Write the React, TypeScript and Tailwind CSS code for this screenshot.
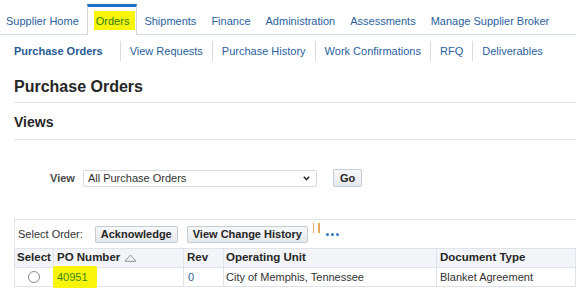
import React from "react";

const Sep = () => <div className="w-px h-[20px] bg-[#d6dce2]" />;

export default function App() {
  const blue = "text-[#2a5f9e]";
  return (
    <div className="w-[576px] h-[299px] overflow-hidden bg-white font-['Liberation_Sans',Arial,sans-serif] text-[11px] text-[#333]">
      {/* Top tabs */}
      <div className="flex items-end h-[35px] border-b border-[#d3d9df]">
        <div className={`pl-[6px] pr-[8px] pt-[8px] pb-[3px] leading-[19px] ${blue}`}>Supplier Home</div>
        <div className="-mb-px bg-white border-l border-r border-t-[3px] border-l-[#d3d9df] border-r-[#d3d9df] border-t-[#1f6fc5] pl-[6px] pr-[1px] pt-[4px] pb-[5px] leading-[19px]">
          <span className="block bg-[#f8f40a] pl-[2px] pr-[6px] pt-[1px] leading-[18px] text-[#2f7d14]">Orders</span>
        </div>
        {["Shipments", "Finance", "Administration", "Assessments", "Manage Supplier Broker"].map((t) => (
          <div key={t} className={`pl-[7px] pr-[8px] pt-[8px] pb-[3px] leading-[19px] whitespace-nowrap ${blue}`}>
            {t}
          </div>
        ))}
      </div>

      {/* Sub navigation */}
      <div className={`flex items-center h-[32px] pl-[14px] whitespace-nowrap ${blue}`}>
        <span className="font-bold pr-[17px] text-[#285a93]">Purchase Orders</span>
        <Sep />
        <span className="px-[9px]">View Requests</span>
        <Sep />
        <span className="px-[9px]">Purchase History</span>
        <Sep />
        <span className="px-[9px]">Work Confirmations</span>
        <Sep />
        <span className="px-[9px]">RFQ</span>
        <Sep />
        <span className="px-[9px]">Deliverables</span>
      </div>

      {/* Headings */}
      <div className="ml-[14px] mt-[10px] pb-[5px] border-b border-[#dfe4e9] text-[16px] leading-[20px] font-bold text-[#262626]">
        Purchase Orders
      </div>
      <div className="ml-[14px] mt-[10px] pb-[8px] border-b border-[#dfe4e9] text-[14px] leading-[18px] font-bold text-[#262626]">
        Views
      </div>

      {/* View row */}
      <div className="flex items-center mt-[29px] h-[18px] pl-[50px]">
        <span className="font-bold text-[#4a4a4a]">View</span>
        <div className="ml-[8px] w-[234px] h-[17px] border border-[#d3dae1] rounded-[2px] flex items-center justify-between pl-[4px] pr-[6px] text-[#333]">
          <span>All Purchase Orders</span>
          <svg width="7" height="5" viewBox="0 0 7 5">
            <path d="M0.8 0.8 L3.5 3.6 L6.2 0.8" fill="none" stroke="#333" strokeWidth="1.6" />
          </svg>
        </div>
        <div className="ml-[16px] h-[18px] border border-[#c5cdd4] rounded-[2px] bg-gradient-to-b from-[#f6f7f9] to-[#e6e9ed] px-[6px] flex items-center font-bold text-[#262626]">
          Go
        </div>
      </div>

      {/* Table region */}
      <div className="ml-[14px] mt-[32px] border-t border-l border-[#dde3e8]">
        <div className="flex items-center h-[28px] pl-[3px] whitespace-nowrap">
          <span className="text-[#333]">Select Order:</span>
          <div className="ml-[12px] h-[17px] border border-[#c5cdd4] rounded-[2px] bg-gradient-to-b from-[#f6f7f9] to-[#e6e9ed] px-[5px] flex items-center font-bold text-[#262626]">
            Acknowledge
          </div>
          <div className="ml-[9px] h-[17px] border border-[#c5cdd4] rounded-[2px] bg-gradient-to-b from-[#f6f7f9] to-[#e6e9ed] px-[5px] flex items-center font-bold text-[#262626]">
            View Change History
          </div>
          <div className="ml-[5px] self-start mt-[3px] flex gap-[4px]">
            <div className="w-[1.5px] h-[10px] bg-[#e4a95c]" />
            <div className="w-[1.5px] h-[10px] bg-[#e4a95c]" />
          </div>
          <div className="ml-[6px] mt-[1px] flex gap-[2px]">
            <div className="w-[3px] h-[3px] rounded-full bg-[#3a78c0]" />
            <div className="w-[3px] h-[3px] rounded-full bg-[#3a78c0]" />
            <div className="w-[3px] h-[3px] rounded-full bg-[#3a78c0]" />
          </div>
        </div>

        <div className="grid grid-cols-[39px_130px_40px_213px_1fr] border-t border-[#dde3e8] whitespace-nowrap">
          {/* Header */}
          <div className="h-[19px] border-b border-r border-[#dde3e8] bg-[#f2f4f7] flex items-center pl-[2px] text-[11.5px] font-bold text-[#262626]">Select</div>
          <div className="h-[19px] border-b border-r border-[#dde3e8] bg-[#f2f4f7] flex items-center pl-[3px] text-[11.5px] font-bold text-[#262626]">
            PO Number
            <svg className="ml-[4px]" width="13" height="8" viewBox="0 0 13 8">
              <path d="M1 7.3 L6.5 1 L12 7.3 Z" fill="none" stroke="#8a949e" strokeWidth="1" />
            </svg>
          </div>
          <div className="h-[19px] border-b border-r border-[#dde3e8] bg-[#f2f4f7] flex items-center pl-[3px] text-[11.5px] font-bold text-[#262626]">Rev</div>
          <div className="h-[19px] border-b border-r border-[#dde3e8] bg-[#f2f4f7] flex items-center pl-[2px] text-[11.5px] font-bold text-[#262626]">Operating Unit</div>
          <div className="h-[19px] border-b border-r border-[#dde3e8] bg-[#f2f4f7] flex items-center pl-[3px] text-[11.5px] font-bold text-[#262626]">Document Type</div>

          {/* Data row */}
          <div className="h-[19px] border-b border-r border-[#dde3e8] flex items-center justify-center">
            <div className="w-[12px] h-[12px] rounded-full border border-[#8c8c8c] bg-white" />
          </div>
          <div className="relative h-[19px] border-b border-r border-[#dde3e8] flex items-center pl-[3px]">
            <div className="absolute left-[-1px] top-[-2px] w-[44px] h-[22px] bg-[#f8f40a] rounded-[2px]" />
            <span className="relative text-[#3b8a18]">40951</span>
          </div>
          <div className={`h-[19px] border-b border-r border-[#dde3e8] flex items-center pl-[4px] ${blue}`}>0</div>
          <div className="h-[19px] border-b border-r border-[#dde3e8] flex items-center pl-[2px] text-[#333]">City of Memphis, Tennessee</div>
          <div className="h-[19px] border-b border-r border-[#dde3e8] flex items-center pl-[3px] text-[#333]">Blanket Agreement</div>
        </div>
      </div>
    </div>
  );
}
